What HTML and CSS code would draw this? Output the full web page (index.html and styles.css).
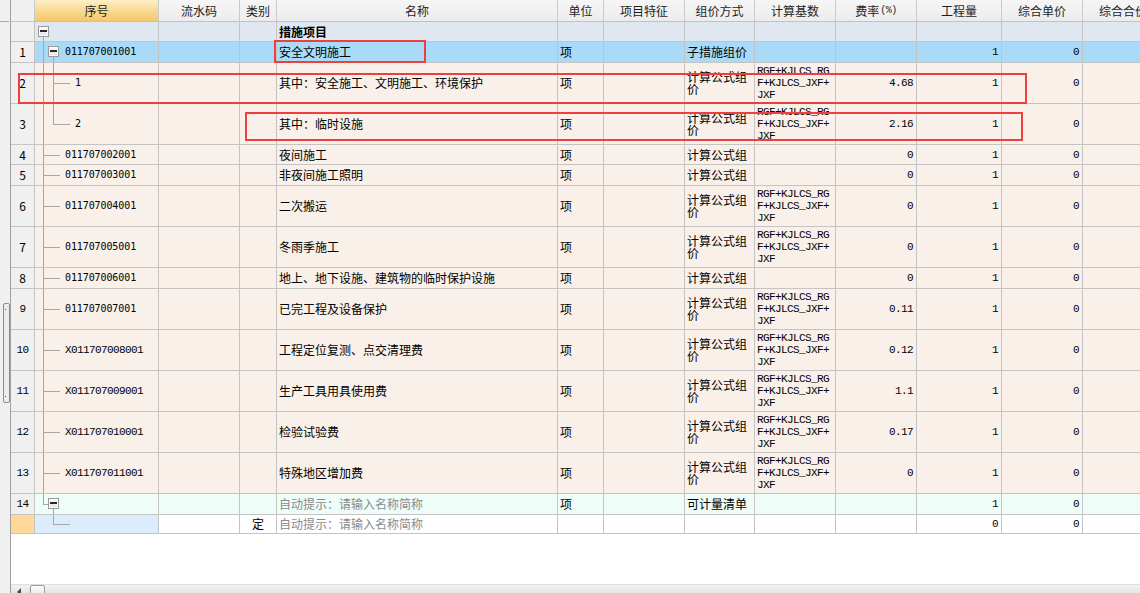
FILE: index.html
```html
<!DOCTYPE html>
<html lang="zh-CN">
<head>
<meta charset="utf-8">
<title>措施项目</title>
<link rel="stylesheet" href="styles.css">
</head>
<body>
<div class="app">
  <div class="side">
    <div class="side-line"></div>
    <div class="splitter"><i></i><i></i></div>
  </div>
  <div class="main">
    <div class="grid">
      <div class="row hdr">
        <div class="c rh"></div>
        <div class="c sel">序号</div>
        <div class="c">流水码</div>
        <div class="c">类别</div>
        <div class="c">名称</div>
        <div class="c">单位</div>
        <div class="c">项目特征</div>
        <div class="c">组价方式</div>
        <div class="c">计算基数</div>
        <div class="c">费率<span class="pct">(%)</span></div>
        <div class="c">工程量</div>
        <div class="c">综合单价</div>
        <div class="c">综合合价</div>
      </div>

      <div class="row h20 group">
        <div class="c rh"></div>
        <div class="c sn"><i class="tv0 frombox0"></i><b class="box box0"></b></div>
        <div class="c"></div>
        <div class="c"></div>
        <div class="c bold">措施项目</div>
        <div class="c"></div>
        <div class="c"></div>
        <div class="c"></div>
        <div class="c"></div>
        <div class="c"></div>
        <div class="c"></div>
        <div class="c"></div>
        <div class="c"></div>
      </div>

      <div class="row h21 cur">
        <div class="c rh">1</div>
        <div class="c sn lv1"><i class="tv0"></i><i class="tv1 frombox1"></i><b class="box box1"></b><span class="code">011707001001</span></div>
        <div class="c"></div>
        <div class="c"></div>
        <div class="c">安全文明施工</div>
        <div class="c">项</div>
        <div class="c"></div>
        <div class="c">子措施组价</div>
        <div class="c"></div>
        <div class="c"></div>
        <div class="c r mono">1</div>
        <div class="c r mono">0</div>
        <div class="c"></div>
      </div>

      <div class="row h41 peach">
        <div class="c rh">2</div>
        <div class="c sn lv2"><i class="tv0"></i><i class="tv1"></i><i class="th1"></i><span class="code">1</span></div>
        <div class="c"></div>
        <div class="c"></div>
        <div class="c">其中：安全施工、文明施工、环境保护</div>
        <div class="c">项</div>
        <div class="c"></div>
        <div class="c wrap"><span>计算公式组价</span></div>
        <div class="c wrap mono"><span>RGF+KJLCS_RGF+KJLCS_JXF+JXF</span></div>
        <div class="c r mono">4.68</div>
        <div class="c r mono">1</div>
        <div class="c r mono">0</div>
        <div class="c"></div>
      </div>

      <div class="row h41 peach">
        <div class="c rh">3</div>
        <div class="c sn lv2"><i class="tv0"></i><i class="tv1 half"></i><i class="th1"></i><span class="code">2</span></div>
        <div class="c"></div>
        <div class="c"></div>
        <div class="c">其中：临时设施</div>
        <div class="c">项</div>
        <div class="c"></div>
        <div class="c wrap"><span>计算公式组价</span></div>
        <div class="c wrap mono"><span>RGF+KJLCS_RGF+KJLCS_JXF+JXF</span></div>
        <div class="c r mono">2.16</div>
        <div class="c r mono">1</div>
        <div class="c r mono">0</div>
        <div class="c"></div>
      </div>

      <div class="row h20 peach">
        <div class="c rh">4</div>
        <div class="c sn lv1"><i class="tv0"></i><i class="th0"></i><span class="code">011707002001</span></div>
        <div class="c"></div>
        <div class="c"></div>
        <div class="c">夜间施工</div>
        <div class="c">项</div>
        <div class="c"></div>
        <div class="c wrap clip"><span>计算公式组价</span></div>
        <div class="c"></div>
        <div class="c r mono">0</div>
        <div class="c r mono">1</div>
        <div class="c r mono">0</div>
        <div class="c"></div>
      </div>

      <div class="row h21 peach">
        <div class="c rh">5</div>
        <div class="c sn lv1"><i class="tv0"></i><i class="th0"></i><span class="code">011707003001</span></div>
        <div class="c"></div>
        <div class="c"></div>
        <div class="c">非夜间施工照明</div>
        <div class="c">项</div>
        <div class="c"></div>
        <div class="c wrap clip"><span>计算公式组价</span></div>
        <div class="c"></div>
        <div class="c r mono">0</div>
        <div class="c r mono">1</div>
        <div class="c r mono">0</div>
        <div class="c"></div>
      </div>

      <div class="row h41 peach">
        <div class="c rh">6</div>
        <div class="c sn lv1"><i class="tv0"></i><i class="th0"></i><span class="code">011707004001</span></div>
        <div class="c"></div>
        <div class="c"></div>
        <div class="c">二次搬运</div>
        <div class="c">项</div>
        <div class="c"></div>
        <div class="c wrap"><span>计算公式组价</span></div>
        <div class="c wrap mono"><span>RGF+KJLCS_RGF+KJLCS_JXF+JXF</span></div>
        <div class="c r mono">0</div>
        <div class="c r mono">1</div>
        <div class="c r mono">0</div>
        <div class="c"></div>
      </div>

      <div class="row h41 peach">
        <div class="c rh">7</div>
        <div class="c sn lv1"><i class="tv0"></i><i class="th0"></i><span class="code">011707005001</span></div>
        <div class="c"></div>
        <div class="c"></div>
        <div class="c">冬雨季施工</div>
        <div class="c">项</div>
        <div class="c"></div>
        <div class="c wrap"><span>计算公式组价</span></div>
        <div class="c wrap mono"><span>RGF+KJLCS_RGF+KJLCS_JXF+JXF</span></div>
        <div class="c r mono">0</div>
        <div class="c r mono">1</div>
        <div class="c r mono">0</div>
        <div class="c"></div>
      </div>

      <div class="row h21 peach">
        <div class="c rh">8</div>
        <div class="c sn lv1"><i class="tv0"></i><i class="th0"></i><span class="code">011707006001</span></div>
        <div class="c"></div>
        <div class="c"></div>
        <div class="c">地上、地下设施、建筑物的临时保护设施</div>
        <div class="c">项</div>
        <div class="c"></div>
        <div class="c wrap clip"><span>计算公式组价</span></div>
        <div class="c"></div>
        <div class="c r mono">0</div>
        <div class="c r mono">1</div>
        <div class="c r mono">0</div>
        <div class="c"></div>
      </div>

      <div class="row h41 peach">
        <div class="c rh mono">9</div>
        <div class="c sn lv1"><i class="tv0"></i><i class="th0"></i><span class="code">011707007001</span></div>
        <div class="c"></div>
        <div class="c"></div>
        <div class="c">已完工程及设备保护</div>
        <div class="c">项</div>
        <div class="c"></div>
        <div class="c wrap"><span>计算公式组价</span></div>
        <div class="c wrap mono"><span>RGF+KJLCS_RGF+KJLCS_JXF+JXF</span></div>
        <div class="c r mono">0.11</div>
        <div class="c r mono">1</div>
        <div class="c r mono">0</div>
        <div class="c"></div>
      </div>

      <div class="row h41 peach">
        <div class="c rh mono">10</div>
        <div class="c sn lv1"><i class="tv0"></i><i class="th0"></i><span class="code mono">X011707008001</span></div>
        <div class="c"></div>
        <div class="c"></div>
        <div class="c">工程定位复测、点交清理费</div>
        <div class="c">项</div>
        <div class="c"></div>
        <div class="c wrap"><span>计算公式组价</span></div>
        <div class="c wrap mono"><span>RGF+KJLCS_RGF+KJLCS_JXF+JXF</span></div>
        <div class="c r mono">0.12</div>
        <div class="c r mono">1</div>
        <div class="c r mono">0</div>
        <div class="c"></div>
      </div>

      <div class="row h41 peach">
        <div class="c rh mono">11</div>
        <div class="c sn lv1"><i class="tv0"></i><i class="th0"></i><span class="code mono">X011707009001</span></div>
        <div class="c"></div>
        <div class="c"></div>
        <div class="c">生产工具用具使用费</div>
        <div class="c">项</div>
        <div class="c"></div>
        <div class="c wrap"><span>计算公式组价</span></div>
        <div class="c wrap mono"><span>RGF+KJLCS_RGF+KJLCS_JXF+JXF</span></div>
        <div class="c r mono">1.1</div>
        <div class="c r mono">1</div>
        <div class="c r mono">0</div>
        <div class="c"></div>
      </div>

      <div class="row h41 peach">
        <div class="c rh mono">12</div>
        <div class="c sn lv1"><i class="tv0"></i><i class="th0"></i><span class="code mono">X011707010001</span></div>
        <div class="c"></div>
        <div class="c"></div>
        <div class="c">检验试验费</div>
        <div class="c">项</div>
        <div class="c"></div>
        <div class="c wrap"><span>计算公式组价</span></div>
        <div class="c wrap mono"><span>RGF+KJLCS_RGF+KJLCS_JXF+JXF</span></div>
        <div class="c r mono">0.17</div>
        <div class="c r mono">1</div>
        <div class="c r mono">0</div>
        <div class="c"></div>
      </div>

      <div class="row h41 peach">
        <div class="c rh mono">13</div>
        <div class="c sn lv1"><i class="tv0"></i><i class="th0"></i><span class="code mono">X011707011001</span></div>
        <div class="c"></div>
        <div class="c"></div>
        <div class="c">特殊地区增加费</div>
        <div class="c">项</div>
        <div class="c"></div>
        <div class="c wrap"><span>计算公式组价</span></div>
        <div class="c wrap mono"><span>RGF+KJLCS_RGF+KJLCS_JXF+JXF</span></div>
        <div class="c r mono">0</div>
        <div class="c r mono">1</div>
        <div class="c r mono">0</div>
        <div class="c"></div>
      </div>

      <div class="row h21 mint">
        <div class="c rh mono">14</div>
        <div class="c sn"><i class="tv0 half"></i><i class="th0 short"></i><i class="tv1 frombox1"></i><b class="box box1"></b></div>
        <div class="c"></div>
        <div class="c"></div>
        <div class="c hint">自动提示：请输入名称简称</div>
        <div class="c">项</div>
        <div class="c"></div>
        <div class="c">可计量清单</div>
        <div class="c"></div>
        <div class="c"></div>
        <div class="c r mono">1</div>
        <div class="c r mono">0</div>
        <div class="c"></div>
      </div>

      <div class="row h19 newrow">
        <div class="c rh"></div>
        <div class="c sn"><i class="tv1 half"></i><i class="th1"></i></div>
        <div class="c"></div>
        <div class="c ctr">定</div>
        <div class="c hint">自动提示：请输入名称简称</div>
        <div class="c"></div>
        <div class="c"></div>
        <div class="c"></div>
        <div class="c"></div>
        <div class="c"></div>
        <div class="c r mono">0</div>
        <div class="c r mono">0</div>
        <div class="c"></div>
      </div>
    </div>
    <div class="hscroll">
      <i class="arrow"></i>
      <div class="thumb"></div>
    </div>
  </div>

  <div class="mark m1"></div>
  <div class="mark m2"></div>
  <div class="mark m3"></div>
</div>
</body>
</html>
```

FILE: styles.css
```css
* { box-sizing: border-box; margin: 0; padding: 0; }

html, body {
  width: 1140px;
  height: 593px;
  overflow: hidden;
  background: #f0f0f0;
}

body {
  font-family: "Noto Sans CJK SC", "Noto Sans", sans-serif;
  font-size: 12px;
  color: #000;
}

.app {
  position: relative;
  display: flex;
  width: 1140px;
  height: 593px;
}

/* left strip */
.side {
  flex: none;
  width: 11px;
  border-right: 1px solid #a0a0a0;
  background: #f0f0f0;
  display: flex;
  flex-direction: column;
}
.side-line {
  margin-top: 21px;
  width: 9px;
  height: 1px;
  background: #a8a8a8;
}
.splitter {
  margin-top: 281px;
  margin-left: 3px;
  width: 7px;
  height: 100px;
  border: 1px solid #8c8c8c;
  border-radius: 2px;
  background: #ececec;
  display: flex;
  flex-direction: column;
  justify-content: space-between;
  padding: 5px 0 5px 1px;
}
.splitter i {
  display: block;
  width: 1px;
  height: 1px;
  background: #2a5fc8;
}

/* main area */
.main {
  flex: 1;
  min-width: 0;
  display: flex;
  flex-direction: column;
  background: #fff;
  overflow: hidden;
}
.grid {
  flex: 1;
  overflow: hidden;
}

.row {
  display: grid;
  grid-template-columns: 24px 124px 81px 37px 281px 46px 81px 70px 81px 81px 85px 81px 81px;
  width: 1153px;
  height: 21px;
}
.row.hdr { height: 22px; }
.row.h19 { height: 19px; }
.row.h20 { height: 20px; }
.row.h21 { height: 21px; }
.row.h41 { height: 41px; }

.c {
  position: relative;
  display: flex;
  align-items: center;
  padding: 0 2px;
  border-right: 1px solid #c4c4c4;
  border-bottom: 1px solid #c4c4c4;
  overflow: hidden;
  white-space: nowrap;
  line-height: 12px;
  min-width: 0;
}
.c.r { justify-content: flex-end; padding-right: 3px; }
.c.ctr { justify-content: center; }
.c.bold { font-weight: 700; }
.c.hint { color: #8a8a8a; }

.c.wrap { white-space: normal; word-break: break-all; }
.c.wrap span { display: block; flex: 1; min-width: 0; }
.c.clip span { max-height: 12px; overflow: hidden; }

.mono {
  font-family: "Liberation Mono", "Noto Sans CJK SC", monospace;
  font-size: 11px;
  letter-spacing: -0.6px;
}
.code {
  font-family: "DejaVu Sans Mono", monospace;
  font-size: 10px;
  letter-spacing: -0.1px;
}
.code.mono {
  font-family: "Liberation Mono", monospace;
  font-size: 11px;
  letter-spacing: -0.6px;
}

/* header */
.hdr .c {
  justify-content: center;
  background: linear-gradient(#f6f6f6, #ececec);
  color: #1e1e1e;
  border-right-color: #cacaca;
  border-bottom-color: #c2c2c2;
}
.hdr .c.sel {
  background: linear-gradient(#fdefc8, #f9dc98 45%, #f5c76b);
}
.pct {
  font-family: "Liberation Mono", monospace;
  font-size: 10px;
  letter-spacing: -0.5px;
  margin-left: 1px;
}

/* row colours */
.group .c { background: #dfe7f1; }
.cur .c { background: #a9dbf9; }
.peach .c { background: #f9f0ea; }
.mint .c { background: #effdf8; }
.newrow .c { background: #fff; }
.newrow .c.sn { background: #ddecfc; }

.grid .row .rh {
  background: #f0f0f0;
  justify-content: center;
  padding: 0;
}
.grid .newrow .rh { background: #ffd798; }

/* tree column */
.sn.lv1 { padding-left: 30px; }
.sn.lv2 { padding-left: 40px; }

.sn i {
  position: absolute;
  display: block;
  background: #a6a6a6;
}
.tv0 { left: 8px; top: 0; bottom: -1px; width: 1px; }
.tv1 { left: 18px; top: 0; bottom: -1px; width: 1px; }
.sn i.half { bottom: auto; height: 50%; }
.tv0.frombox0 { top: 15px; }
.tv1.frombox1 { top: 15px; }
.th0 { left: 8px; top: 50%; width: 17px; height: 1px; }
.th0.short { width: 5px; }
.th1 { left: 18px; top: 50%; width: 17px; height: 1px; }

.box {
  position: absolute;
  top: 50%;
  margin-top: -6px;
  width: 11px;
  height: 11px;
  border: 1px solid #9a9a9a;
  background: linear-gradient(#ffffff, #e2e2e2);
  box-shadow: inset 0 0 0 1px #fbfbfb;
}
.box::after {
  content: "";
  position: absolute;
  left: 1px;
  right: 1px;
  top: 3px;
  height: 2px;
  background: #2a2a2a;
}
.box0 { left: 3px; }
.box1 { left: 13px; }

/* horizontal scroll bar */
.hscroll {
  flex: none;
  height: 9px;
  background: linear-gradient(#f2f2f2, #e6e6e6);
  border-top: 1px solid #dedede;
  display: flex;
  align-items: flex-start;
  padding-left: 6px;
}
.arrow {
  display: block;
  margin-top: 3px;
  width: 0;
  height: 0;
  border-top: 4px solid transparent;
  border-bottom: 4px solid transparent;
  border-right: 4px solid #4a4a4a;
}
.thumb {
  margin-left: 9px;
  width: 15px;
  height: 12px;
  border: 1px solid #9c9c9c;
  border-radius: 2px;
  background: linear-gradient(#fafafa, #e8e8e8);
}

/* red annotation boxes */
.mark {
  position: absolute;
  border: 2px solid #ef3e3e;
  pointer-events: none;
}
.m1 { left: 274px; top: 40px; width: 152px; height: 23px; }
.m2 { left: 18px; top: 73px; width: 1009px; height: 31px; }
.m3 { left: 245px; top: 112px; width: 778px; height: 29px; }
```
